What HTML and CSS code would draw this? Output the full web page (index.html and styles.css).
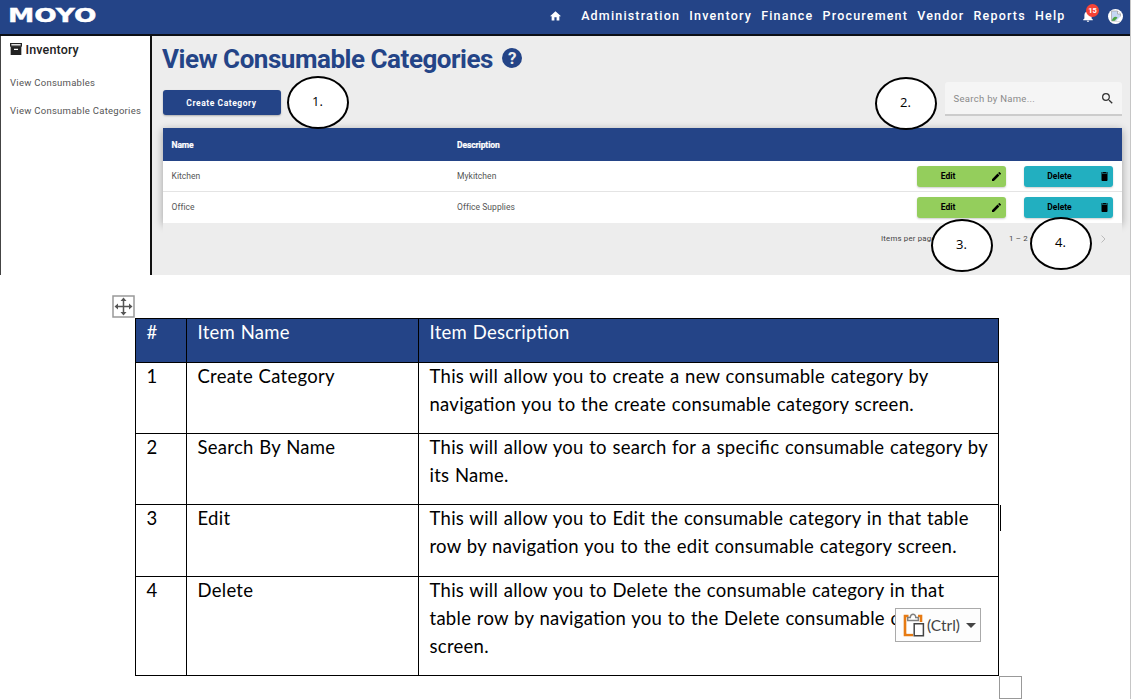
FILE: index.html
```html
<!DOCTYPE html>
<html lang="en">
<head>
<meta charset="utf-8">
<title>View Consumable Categories</title>
<link rel="stylesheet" href="styles.css">
</head>
<body>
<div class="page">
  <section class="app">
    <header class="topbar">
      <span class="logo">MOYO</span>
      <nav class="nav">
        <svg class="home" viewBox="2 3 20 17.5" width="11" height="10"><path fill="#fff" d="M10 20v-6h4v6h5v-8h3L12 3 2 12h3v8z"/></svg>
        <a>Administration</a><a>Inventory</a><a>Finance</a><a>Procurement</a><a>Vendor</a><a>Reports</a><a>Help</a>
      </nav>
      <div class="bell">
        <svg viewBox="4 2 16 20" width="10" height="12"><path fill="#fff" d="M12 22c1.100 0 2-.9 2-2h-4c0 1.100.9 2 2 2zm6-6v-5c0-3.070-1.640-5.640-4.500-6.320V4c0-.83-.67-1.500-1.500-1.500s-1.500.67-1.500 1.500v.68C7.630 5.360 6 7.920 6 11v5l-2 2v1h16v-1z"/></svg>
        <span class="badge">15</span>
      </div>
      <span class="avatar">
        <svg viewBox="0 0 12 12" width="12" height="12"><path d="M1.500 1h6L10.500 4v7h-9z" fill="#c5d7f3" stroke="#a9a9a9" stroke-width=".8"/><path d="M7.500 1v3h3" fill="#fff" stroke="#999" stroke-width=".7"/><path d="M1.800 10.700c1-4 4-5 5.700-3L4.500 10.700z" fill="#4aa540"/><path d="M6 11l5-5v5z" fill="#fff"/></svg>
      </span>
    </header>
    <div class="body">
      <aside class="side">
        <h2 class="side-title"><svg viewBox="3 3 18 18" width="12" height="12"><path fill="#222" d="M3 3h18v5.500H3z"/><path fill="#fff" d="M5 4.700h14v2H5z"/><path fill="#222" fill-rule="evenodd" d="M4 8h16v13H4zM9 11.500v2h6v-2z"/></svg>Inventory</h2>
        <a>View Consumables</a>
        <a class="second">View Consumable Categories</a>
      </aside>
      <main class="main">
        <h1 class="title"><span>View Consumable Categories</span>
          <span class="help">?</span>
        </h1>
        <div class="tools">
          <button class="create">Create Category</button>
          <div class="search"><span>Search by Name...</span>
            <svg viewBox="3 3 18 18" width="11" height="11"><path fill="#333" d="M15.500 14h-.79l-.28-.27A6.470 6.470 0 0 0 16 9.500 6.500 6.500 0 1 0 9.500 16c1.610 0 3.090-.59 4.230-1.570l.27.28v.79l5 4.990L20.490 19l-4.990-5zm-6 0C7.010 14 5 11.990 5 9.500S7.010 5 9.500 5 14 7.010 14 9.500 11.990 14 9.500 14z"/></svg>
          </div>
        </div>
        <div class="grid">
          <div class="row head"><span>Name</span><span>Description</span></div>
          <div class="row"><span>Kitchen</span><span class="wide">Mykitchen</span>
            <button class="btn edit">Edit<svg viewBox="3 3 18 18" width="9" height="9"><path d="M3 17.250V21h3.750L17.810 9.940l-3.750-3.750zM20.710 7.040a1 1 0 0 0 0-1.410l-2.340-2.340a1 1 0 0 0-1.410 0l-1.830 1.830 3.750 3.750z"/></svg></button>
            <button class="btn delete">Delete<svg viewBox="5 3 14 18" width="7" height="9"><path d="M6 19c0 1.100.9 2 2 2h8c1.100 0 2-.9 2-2V7H6zM19 4h-3.500l-1-1h-5l-1 1H5v2h14z"/></svg></button></div>
          <div class="row last"><span>Office</span><span class="wide">Office Supplies</span>
            <button class="btn edit">Edit<svg viewBox="3 3 18 18" width="9" height="9"><path d="M3 17.250V21h3.750L17.810 9.940l-3.750-3.750zM20.710 7.040a1 1 0 0 0 0-1.410l-2.340-2.340a1 1 0 0 0-1.410 0l-1.830 1.830 3.750 3.750z"/></svg></button>
            <button class="btn delete">Delete<svg viewBox="5 3 14 18" width="7" height="9"><path d="M6 19c0 1.100.9 2 2 2h8c1.100 0 2-.9 2-2V7H6zM19 4h-3.500l-1-1h-5l-1 1H5v2h14z"/></svg></button></div>
        </div>
        <div class="pager"><span class="per">Items per page:</span><span class="select"></span><span class="range">1 – 2 of 2</span>
          <svg viewBox="0 0 6 8" width="6" height="8"><path d="M1.500.5L5 4 1.500 7.500" fill="none" stroke="#bbb"/></svg></div>
      </main>
    </div>
    <span class="callout c1">1.</span>
    <span class="callout c2">2.</span>
    <span class="callout c3">3.</span>
    <span class="callout c4">4.</span>
  </section>

  <section class="doc">
    <table class="items">
      <thead><tr class="r0"><th>#</th><th>Item Name</th><th>Item Description</th></tr></thead>
      <tbody>
        <tr class="r1"><td>1</td><td>Create Category</td><td>This will allow you to create a new consumable category by<br>navigation you to the create consumable category screen.</td></tr>
        <tr class="r2"><td>2</td><td>Search By Name</td><td>This will allow you to search for a specific consumable category by<br>its Name.</td></tr>
        <tr class="r3"><td>3</td><td>Edit</td><td>This will allow you to Edit the consumable category in that table<br>row by navigation you to the edit consumable category screen.</td></tr>
        <tr class="r4"><td>4</td><td>Delete</td><td>This will allow you to Delete the consumable category in that<br>table row by navigation you to the Delete consumable category<br>screen.</td></tr>
      </tbody>
    </table>
    <svg class="move" viewBox="0 0 23 23" width="23" height="23"><rect x="1" y="1" width="21" height="21" fill="#fff" stroke="#999" stroke-width="1.500"/><path d="M11.500 4v15M4 11.500h15" stroke="#555" stroke-width="1.500"/><path d="M11.500 2.500l3 3.500h-6zM11.500 20.500l3-3.500h-6zM2.500 11.500l3.500-3v6zM20.500 11.500l-3.500-3v6z" fill="#555"/></svg>
    <span class="caret"></span>
    <span class="resize"></span>
    <div class="paste">
      <svg viewBox="0 0 22 24" width="22" height="24"><path d="M5.500 3H2v19h8M15 3h3v6" fill="none" stroke="#e77b13" stroke-width="2.600"/><path d="M4 5v15.500h7V9h5V5z" fill="#fff"/><path d="M4.700 7.500V4.500h2.600c0-4.300 5.400-4.300 5.400 0h2.600v3z" fill="#fff" stroke="#808080" stroke-width="1.400"/><path d="M11.200 10.700h9.200v12h-9.200z" fill="#fff" stroke="#444" stroke-width="1.500"/></svg>
      <span>(Ctrl)</span><i></i>
    </div>
  </section>
</div>
</body>
</html>
```

FILE: styles.css
```css
* { box-sizing: border-box; }
body { margin: 0; background: #fff; }
.page { width: 1131px; height: 699px; overflow: hidden; border-right: 1px solid #c6c6c6; }
h1, h2 { margin: 0; }
button { border: 0; padding: 0; }

.app { position: relative; height: 275px; font-family: Roboto, sans-serif; }
.topbar { display: flex; align-items: center; height: 36px; padding: 0 7px 2px 8px; background: #244487; border-bottom: 2px solid #0c0f16; }
.logo { width: 87px; font: bold 19px/32px "DejaVu Sans", sans-serif; color: #fff; -webkit-text-stroke: .4px #fff; transform: scaleX(1.39); transform-origin: 0 50%; height: 34px; }
.nav { display: flex; align-items: center; gap: 10.200px; margin-left: auto; font-weight: 500; font-size: 12.5px; line-height: 14px; letter-spacing: 1.18px; color: #fff; padding-bottom: 1px; }
.nav a { margin-right: -1px; }
.home { margin-right: 10px; }
.bell { position: relative; width: 12px; height: 12px; margin-left: 18.500px; display: flex; }
.badge { position: absolute; left: 3px; top: -6px; width: 13px; height: 13px; border-radius: 50%; background: #f44336; color: #fff; font: bold 7.5px/13px Roboto, sans-serif; text-align: center; }
.avatar { display: flex; align-items: center; justify-content: center; width: 15px; height: 15px; margin-left: 13px; border-radius: 50%; background: #fff; overflow: hidden; }

.body { display: flex; height: 239px; }
.side { width: 152px; padding: 7px 0 0 9px; border-left: 1px solid #444; border-right: 2px solid #111; display: flex; flex-direction: column; font-size: 9.5px; line-height: 14px; letter-spacing: .27px; color: #555; white-space: nowrap; }
.side-title { display: flex; gap: 4px; align-items: center; height: 14px; margin: 0 0 19px -.5px; font-size: 12.5px; font-weight: 500; letter-spacing: .15px; color: #222; }
.side-title svg { margin-top: -2px; }
.side .second { margin-top: 14px; }

.main { flex: 1; padding: 8px 8.500px 0 10.500px; background: #ededed; }
.title { display: flex; align-items: center; height: 30px; margin-left: -.5px; color: #244487; font-size: 26px; font-weight: 700; white-space: nowrap; letter-spacing: -.47px; }
.help { width: 20px; height: 20px; margin: -3px 0 0 9px; border-radius: 50%; background: #244487; color: #ededed; font-size: 17px; line-height: 20px; text-align: center; }
.tools { display: flex; justify-content: space-between; height: 54px; padding-top: 8px; }
.create { width: 118px; height: 25px; margin-top: 8px; border-radius: 3px; background: #244487; color: #fff; font: bold 8.5px Roboto, sans-serif; letter-spacing: .55px; box-shadow: 0 1px 2px #0004; }
.search { display: flex; align-items: center; justify-content: space-between; width: 177px; height: 34px; padding: 0 9px; background: #f5f5f5; border-bottom: 2px solid #ccc; border-radius: 3px 3px 0 0; font-size: 9.5px; letter-spacing: .3px; color: #8a8a8a; }
.grid { background: #fff; box-shadow: 0 2px 8px #0005; }
.row { display: flex; align-items: center; height: 31px; padding: 0 9px; border-bottom: 1px solid #e4e4e4; font-size: 8.5px; letter-spacing: .05px; color: #555; }
.row.last { border-bottom: 0; }
.row > span { width: 285.500px; }
.row > span.wide { width: 459.500px; }
.row.last > span { padding-bottom: 1px; }
.row.head { height: 33px; background: #244487; border-bottom: 0; color: #fff; font-weight: 700; letter-spacing: -.1px; -webkit-text-stroke: .2px #fff; }
.btn { position: relative; width: 89px; height: 21px; border-radius: 3px; font: 700 8.5px/21px Roboto, sans-serif; color: #000; padding-right: 26px; box-shadow: 0 1px 2px #0003; }
.btn svg { position: absolute; right: 5px; top: 6px; }
.edit { background: #94ce5c; }
.delete { margin-left: 18px; padding-right: 17px; background: #22afc0; }
.pager { position: relative; display: flex; align-items: center; height: 31px; padding-left: 718.500px; background: #ededed; font-size: 7.8px; letter-spacing: .2px; color: #444; white-space: nowrap; }
.per { width: 84px; }
.select { width: 23px; height: 20px; margin-bottom: -1px; border: 1px solid #bbb; border-radius: 3px; }
.range { margin-left: 21px; width: 91px; }

.callout { position: absolute; width: 62px; height: 53px; border: 2px solid #000; border-radius: 50%; background: #fff; font: 13px/47px "Open Sans", sans-serif; text-align: center; color: #000; padding-right: 1px; }
.c1 { left: 287px; top: 76px; }
.c2 { left: 875px; top: 77px; }
.c3 { left: 931px; top: 219px; }
.c4 { left: 1030px; top: 217px; }

.doc { position: relative; padding: 43px 0 0 135px; font-family: Lato, sans-serif; color: #000; }
.items { width: 864px; table-layout: fixed; border-collapse: collapse; font-size: 18.5px; letter-spacing: .27px; word-spacing: .6px; font-feature-settings: "liga" 1; }
.items th, .items td { border: 1px solid #000; padding: 0 0 0 10.500px; text-align: left; vertical-align: top; font-weight: 400; white-space: nowrap; line-height: 27.800px; }
.items th { background: #244487; color: #fff; }
.items th:nth-child(1) { width: 51px; }
.items th:nth-child(2) { width: 232px; }
.r0 { height: 44px; }
.r1, .r2 { height: 71px; }
.r3 { height: 72px; }
.r4 { height: 99px; }
.move { position: absolute; left: 112px; top: 20px; }
.caret { position: absolute; left: 1000px; top: 230px; width: 1px; height: 26px; background: #000; }
.resize { position: absolute; left: 999px; top: 401px; width: 23px; height: 23px; border: 1.500px solid #999; background: #fff; }
.paste { position: absolute; left: 895px; top: 333px; width: 86px; height: 34px; display: flex; align-items: center; padding-left: 7px; border: 1px solid #aaa; background: #fdfdfd; font-size: 15.5px; color: #444; }
.paste span { margin-left: 2px; width: 39px; }
.paste i { border: 5px solid transparent; border-top-color: #444; border-bottom: 0; }
```
